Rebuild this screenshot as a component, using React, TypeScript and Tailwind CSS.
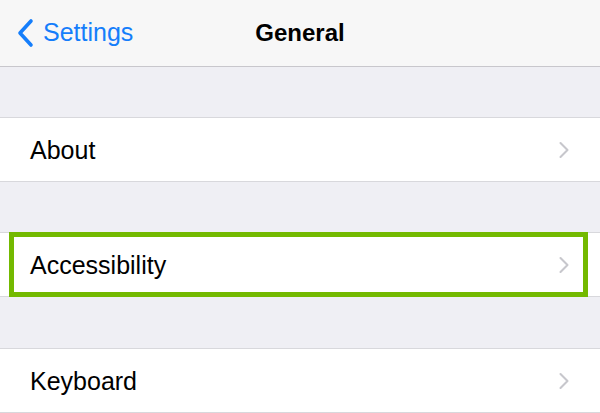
import { ChevronRight } from "lucide-react";

const font = { fontFamily: '"Liberation Sans", Arial, sans-serif' };

function Row({ label, highlight }: { label: string; highlight?: boolean }) {
  return (
    <div className="relative flex h-[65px] items-center justify-between border-y border-[#d8d8dc] bg-white pl-[30px] pr-[22px]">
      <span className="pt-[2px] text-[25px] text-black">{label}</span>
      <ChevronRight className="h-[28px] w-[28px] text-[#c7c7cc]" strokeWidth={1.8} />
      {highlight && (
        <div className="pointer-events-none absolute left-[9px] right-[12px] top-[-1px] bottom-[-1px] border-[5px] border-[#73b900]" />
      )}
    </div>
  );
}

export default function App() {
  return (
    <div className="h-[413px] w-[600px] overflow-hidden bg-[#efeff4]" style={font}>
      <div className="relative flex h-[67px] items-center justify-center border-b border-[#c8c7cc] bg-[#f7f7f7]">
        <div className="absolute left-[16px] top-0 flex h-full items-center gap-[9px] text-[#157efb]">
          <svg width="18" height="30" viewBox="0 0 18 30" fill="none">
            <path d="M15 3 L4 15 L15 27" stroke="currentColor" strokeWidth="3.6" strokeLinecap="round" strokeLinejoin="round" />
          </svg>
          <span className="text-[25px]">Settings</span>
        </div>
        <span className="text-[24px] font-bold text-black">General</span>
      </div>
      <div className="h-[50px]" />
      <Row label="About" />
      <div className="h-[50px]" />
      <Row label="Accessibility" highlight />
      <div className="h-[51px]" />
      <Row label="Keyboard" />
    </div>
  );
}
